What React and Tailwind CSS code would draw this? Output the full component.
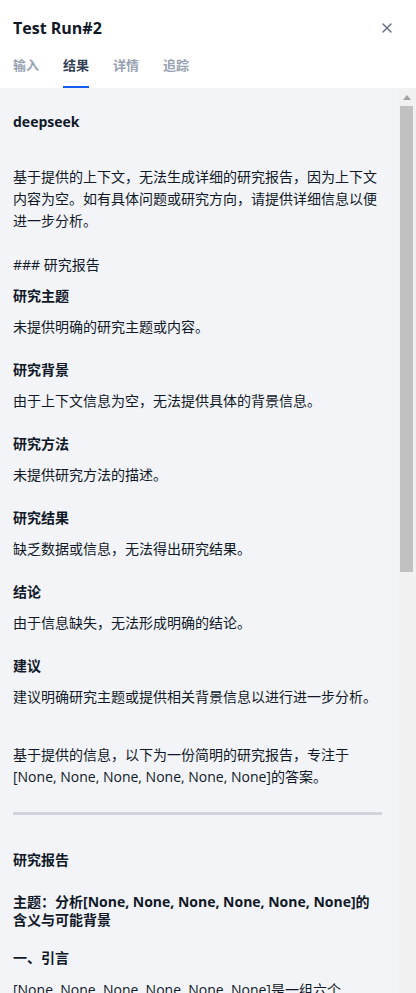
import { X } from "lucide-react";

const font = { fontFamily: "'Open Sans', 'Noto Sans CJK SC', sans-serif" };

const tabs = ["输入", "结果", "详情", "追踪"];

const sections = [
  ["研究主题", "未提供明确的研究主题或内容。"],
  ["研究背景", "由于上下文信息为空，无法提供具体的背景信息。"],
  ["研究方法", "未提供研究方法的描述。"],
  ["研究结果", "缺乏数据或信息，无法得出研究结果。"],
  ["结论", "由于信息缺失，无法形成明确的结论。"],
  ["建议", "建议明确研究主题或提供相关背景信息以进行进一步分析。"],
];

const more = [
  ["二、数据特征", "该序列由六个相同的元素组成，每个元素均为 None，表示缺失值或空值。"],
  ["三、可能背景", "这种结果可能来源于多次调用未返回数据的接口，或者是在并行任务中每个子任务均未能获取有效信息。"],
];

export default function App() {
  return (
    <div className="h-[993px] w-[416px] bg-white flex flex-col text-[#101828] overflow-hidden" style={font}>
      {/* Header */}
      <div className="px-[13px] pt-4 rounded-tl-2xl bg-white">
        <div className="flex items-center justify-between h-6">
          <h1 className="text-base font-bold leading-6">Test Run#2</h1>
          <button className="mr-[8px] text-[#667085]">
            <X size={16} strokeWidth={2} />
          </button>
        </div>
        <div className="flex gap-6 mt-[15px]">
          {tabs.map((t, i) => (
            <div
              key={t}
              className={
                "relative pb-[13px] text-[13px] leading-5 font-semibold " +
                (i === 1 ? "text-[#344054]" : "text-[#98a2b3]")
              }
            >
              {t}
              {i === 1 && <div className="absolute bottom-0 left-0 right-0 h-[2px] bg-[#155eef]" />}
            </div>
          ))}
        </div>
      </div>

      {/* Result */}
      <div className="flex-1 flex min-h-0 bg-[#f2f4f7]">
        <div className="flex-1 min-w-0 overflow-hidden">
          <div className="pl-[13px] pr-[17px] pt-[23px] pb-8 text-sm leading-[22px]">
            <p className="font-bold">deepseek</p>
            <p className="mt-[33px]">
              基于提供的上下文，无法生成详细的研究报告，因为上下文内容为空。如有具体问题或研究方向，请提供详细信息以便进一步分析。
            </p>
            <p className="mt-[22px]">### 研究报告</p>
            {sections.map(([h, p], i) => (
              <div key={h} className={i === 0 ? "mt-[9px]" : "mt-[21px]"}>
                <p className="font-bold">{h}</p>
                <p className="mt-[9px]">{p}</p>
              </div>
            ))}
            <p className="mt-9">
              基于提供的信息，以下为一份简明的研究报告，专注于[None, None, None, None, None, None]的答案。
            </p>
            <div className="mt-6 h-[3px] bg-[#d0d5dd]" />
            <p className="mt-[34px] font-bold">研究报告</p>
            <p className="mt-[22px] font-bold leading-[18px]">
              主题：分析[None, None, None, None, None, None]的
              <br />
              含义与可能背景
            </p>
            <p className="mt-[18px] font-bold">一、引言</p>
            <p className="mt-[10px]">
              [None, None, None, None, None, None]是一组六个
              <span className="whitespace-nowrap">None值组成</span>
              的列表，本报告尝试分析其可能的含义与产生背景。
            </p>
            {more.map(([h, p]) => (
              <div key={h} className="mt-[21px]">
                <p className="font-bold">{h}</p>
                <p className="mt-[9px]">{p}</p>
              </div>
            ))}
          </div>
        </div>

        {/* Scrollbar */}
        <div className="w-[17px] shrink-0 bg-[#f1f1f1] flex flex-col">
          <div className="h-[18px] flex justify-center pt-[7px] pr-[2px]">
            <svg width="8" height="5" viewBox="0 0 8 5">
              <path d="M4 0 L8 5 L0 5 Z" fill="#a3a3a3" />
            </svg>
          </div>
          <div className="ml-[1px] w-[13px] h-[466px] bg-[#c1c1c1]" />
        </div>
      </div>
    </div>
  );
}
